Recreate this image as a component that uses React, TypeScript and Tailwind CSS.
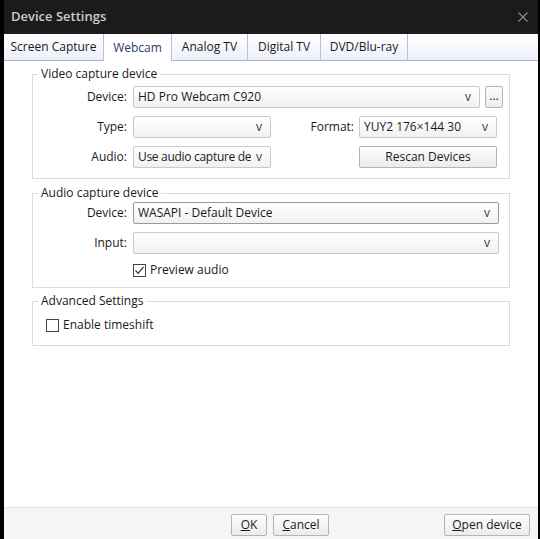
import React from "react";

const font = "font-['Segoe_UI','Open_Sans','Noto_Sans',sans-serif]";

function Combo({ value, width, focused, tight }: { value?: string; width: string; focused?: boolean; tight?: boolean }) {
  return (
    <div
      className={`${width} relative flex h-[22px] items-center overflow-hidden rounded-[2px] border bg-gradient-to-b from-white to-[#f1f1f1] pl-[4px] pr-[17px] text-[12px] text-[#1a1a1a] ${
        focused ? "border-[#9a9a9a]" : "border-[#c9c9c9]"
      }`}
    >
      <span className={`overflow-hidden whitespace-nowrap ${tight ? "tracking-[-0.3px]" : ""}`}>{value}</span>
      <span className="absolute right-[8px] top-[1px] text-[12px] text-[#2a3a66]">v</span>
    </div>
  );
}

function Button({ children, className = "" }: { children: React.ReactNode; className?: string }) {
  return (
    <div
      className={`flex h-[22px] items-center justify-center rounded-[2px] border border-[#b4b4b4] bg-gradient-to-b from-[#fdfdfd] to-[#ececec] text-[12px] text-[#1a1a1a] ${className}`}
    >
      {children}
    </div>
  );
}

function Label({ children }: { children: React.ReactNode }) {
  return <div className="w-[95px] shrink-0 pr-[1px] text-right text-[12px] text-[#1a1a1a]">{children}</div>;
}

function Checkbox({ checked }: { checked?: boolean }) {
  return (
    <div className="flex h-[13px] w-[13px] shrink-0 items-center justify-center border border-[#444] bg-white">
      {checked && (
        <svg width="11" height="11" viewBox="0 0 11 11">
          <path d="M1.5 5.5 L4.2 8.3 L9.5 1.8" fill="none" stroke="#333" strokeWidth="1.2" />
        </svg>
      )}
    </div>
  );
}

function Group({ title, children, className = "" }: { title: string; children: React.ReactNode; className?: string }) {
  return (
    <fieldset className={`border border-[#dcdcdc] ${className}`}>
      <legend className="ml-[5px] px-[3px] text-[12px] leading-[16px] text-[#1a1a1a]">{title}</legend>
      {children}
    </fieldset>
  );
}

const tabs = ["Screen Capture", "Webcam", "Analog TV", "Digital TV", "DVD/Blu-ray"];
const tabWidths = ["w-[100px]", "w-[68px]", "w-[76px]", "w-[73px]", "w-[87px]"];

export default function App() {
  return (
    <div className={`${font} flex h-[539px] w-[540px] flex-col bg-black pl-[4px] pr-[2px]`}>
      {/* Title bar */}
      <div className="flex h-[34px] shrink-0 items-center justify-between bg-[#1b1b1b] pl-[7px] pr-[10px]">
        <span className="text-[13px] font-semibold text-[#c9ccd4]">Device Settings</span>
        <svg width="10" height="10" viewBox="0 0 10 10">
          <path d="M0.5 0.5 L9.5 9.5 M9.5 0.5 L0.5 9.5" stroke="#8a8a8a" strokeWidth="1.2" />
        </svg>
      </div>

      <div className="flex flex-1 flex-col bg-white">
        {/* Tabs */}
        <div className="flex h-[27px] shrink-0 border-b border-[#aab4cf] bg-gradient-to-b from-white to-[#edf0fa]">
          {tabs.map((t, i) => (
            <div
              key={t}
              className={`${tabWidths[i]} flex items-center justify-center border-r border-[#b7c0d8] text-[12px] ${
                i === 1 ? "mb-[-1px] bg-white text-[#1f3a66]" : "text-[#1a1a1a]"
              }`}
            >
              {t}
            </div>
          ))}
        </div>

        {/* Content */}
        <div className="flex-1 px-[28px] pt-[5px]">
          <Group title="Video capture device" className="pb-[10px]">
            <div className="mt-[4px] flex flex-col gap-[8px]">
              <div className="flex items-center gap-[5px]">
                <Label>Device:</Label>
                <Combo value="HD Pro Webcam C920" width="w-[347px]" />
                <Button className="w-[18px] pb-[3px]">...</Button>
              </div>
              <div className="flex items-center gap-[5px]">
                <Label>Type:</Label>
                <Combo width="w-[138px]" />
                <div className="w-[78px] text-right text-[12px] text-[#1a1a1a]">Format:</div>
                <Combo value="YUY2 176×144 30" width="w-[138px]" />
              </div>
              <div className="flex items-center gap-[5px]">
                <Label>Audio:</Label>
                <Combo value="Use audio capture de" width="w-[138px]" tight />
                <div className="w-[78px]" />
                <Button className="w-[138px]">Rescan Devices</Button>
              </div>
            </div>
          </Group>

          <Group title="Audio capture device" className="mt-[6px] pb-[8px]">
            <div className="mt-[1px] flex flex-col gap-[8px]">
              <div className="flex items-center gap-[5px]">
                <Label>Device:</Label>
                <Combo value="WASAPI - Default Device" width="w-[366px]" focused />
              </div>
              <div className="flex items-center gap-[5px]">
                <Label>Input:</Label>
                <Combo width="w-[366px]" />
              </div>
              <div className="mt-[-1px] flex items-center gap-[4px] pl-[100px]">
                <Checkbox checked />
                <span className="text-[12px] text-[#1a1a1a]">Preview audio</span>
              </div>
            </div>
          </Group>

          <Group title="Advanced Settings" className="mt-[5px] pb-[11px]">
            <div className="mt-[7px] flex items-center gap-[4px] pl-[13px]">
              <Checkbox />
              <span className="text-[12px] text-[#1a1a1a]">Enable timeshift</span>
            </div>
          </Group>
        </div>

        {/* Footer */}
        <div className="flex h-[32px] shrink-0 items-start border-t border-[#e3e3e3] bg-[#f5f5f5] pt-[6px]">
          <div className="ml-[227px] flex gap-[6px]">
            <Button className="w-[36px]">
              <span className="underline">O</span>K
            </Button>
            <Button className="w-[56px]">
              <span className="underline">C</span>ancel
            </Button>
          </div>
          <Button className="ml-[115px] w-[86px]">
            <span className="underline">O</span>pen device
          </Button>
        </div>
      </div>
    </div>
  );
}
